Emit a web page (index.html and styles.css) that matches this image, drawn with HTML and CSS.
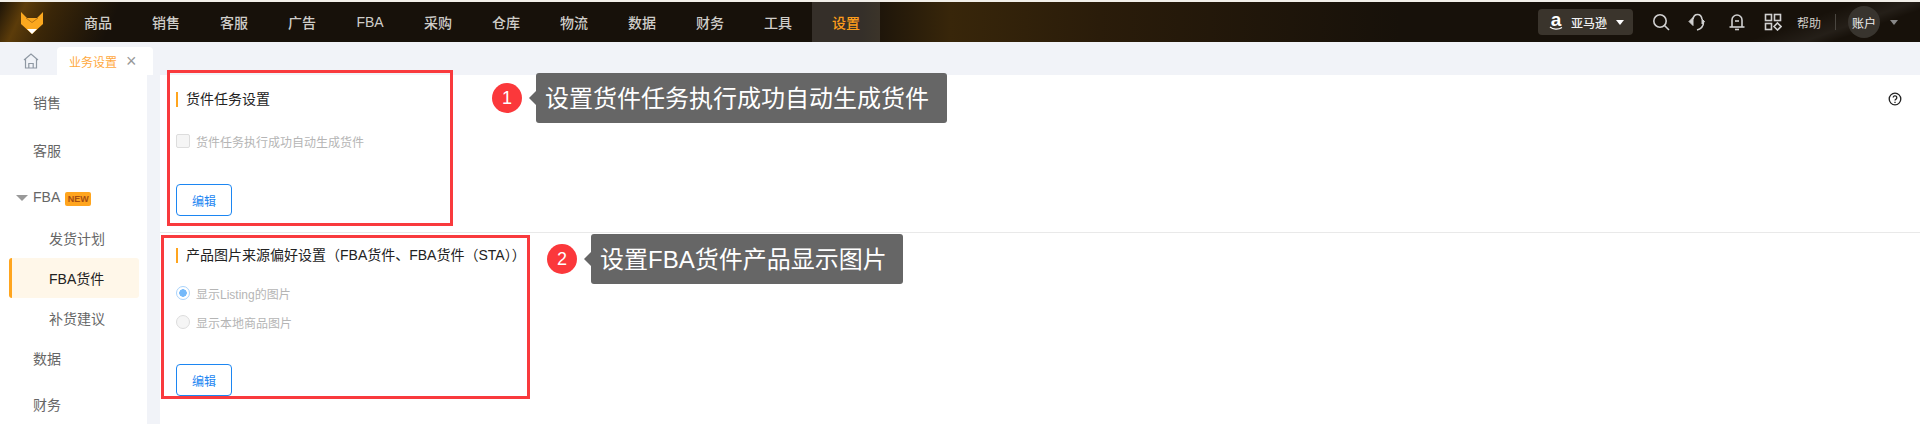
FILE: index.html
```html
<!DOCTYPE html>
<html lang="zh-CN">
<head>
    <meta charset="UTF-8">
    <meta name="viewport" content="width=device-width, initial-scale=1.0">
    <title>业务设置</title>
    <link rel="stylesheet" href="styles.css">
</head>
<body>
    <header class="topbar">
        <div class="logo">
            <svg width="22" height="22" viewBox="0 0 22 22">
                <polygon points="0,0 6,6 16,6 22,0 22,12 11,22 0,12" fill="#fba81f"/>
                <polygon points="6,17 16,17 11,22" fill="#fff"/>
                <polyline points="5,6 11,10.500 17,6" fill="none" stroke="#b87412" stroke-width="1"/>
            </svg>
        </div>
        <nav class="nav">
            <a class="nav-item">商品</a>
            <a class="nav-item">销售</a>
            <a class="nav-item">客服</a>
            <a class="nav-item">广告</a>
            <a class="nav-item">FBA</a>
            <a class="nav-item">采购</a>
            <a class="nav-item">仓库</a>
            <a class="nav-item">物流</a>
            <a class="nav-item">数据</a>
            <a class="nav-item">财务</a>
            <a class="nav-item">工具</a>
            <a class="nav-item active">设置</a>
        </nav>
        <div class="tools">
            <div class="platform">
                <span class="amazon">a<svg width="14" height="5" viewBox="0 0 14 5"><path d="M1 1c3 2.500 8 3 12 .5" fill="none" stroke="#fff" stroke-width="1.200"/></svg></span>
                <span class="platform-name">亚马逊</span>
                <span class="caret white"></span>
            </div>
            <svg class="tool tool-search" width="18" height="18" viewBox="0 0 18 18" fill="none" stroke="#d0d0d0" stroke-width="1.600">
                <circle cx="8" cy="8" r="6.200"/><path d="M12.500 12.500l4.500 4.500"/>
            </svg>
            <svg class="tool tool-service" width="18" height="18" viewBox="0 0 18 18" fill="none" stroke="#d0d0d0" stroke-width="1.600">
                <path d="M5 6c1-6 8-6 9 0"/><path d="M15.500 9c0 4-3 7-6.500 8"/>
                <path d="M5 4.500L1 8.500l4 4zM14 6l2.500 2.500L14 11z" fill="#d0d0d0" stroke-width="1"/>
            </svg>
            <svg class="tool tool-bell" width="18" height="18" viewBox="0 0 18 18" fill="none" stroke="#d0d0d0" stroke-width="1.600">
                <path d="M4 14V7a5 5 0 0 1 10 0v7"/><path d="M1.500 14h15"/><path d="M7 8h4"/><path d="M7 16.500h4"/>
            </svg>
            <svg class="tool tool-apps" width="18" height="18" viewBox="0 0 18 18" fill="none" stroke="#d0d0d0" stroke-width="1.600">
                <rect x="1.500" y="1.500" width="6" height="6"/><rect x="10.500" y="1.500" width="6" height="6"/>
                <rect x="1.500" y="10.500" width="6" height="6"/><path d="M13.500 10l3.500 3.500-3.500 3.500-3.500-3.500z"/>
            </svg>
            <span class="help">帮助</span>
            <span class="sep"></span>
            <span class="avatar">账户</span>
            <span class="caret gray"></span>
        </div>
    </header>

    <div class="tabs">
        <div class="home-tab">
            <svg width="16" height="16" viewBox="0 0 16 16" fill="none" stroke="#8f98a3" stroke-width="1.200">
                <path d="M1 7l7-6 7 6"/><path d="M2.500 6v9h11V6"/><path d="M5.800 15v-4.500h4.400V15"/>
            </svg>
        </div>
        <div class="tab">业务设置<span class="tab-close">×</span></div>
    </div>

    <div class="main">
        <aside class="sidebar">
            <div class="side-item">销售</div>
            <div class="side-item">客服</div>
            <div class="side-item open">
                <span class="side-caret"></span>FBA<span class="new-badge">NEW</span>
            </div>
            <div class="side-sub">
                <div class="sub-item">发货计划</div>
                <div class="sub-item current">FBA货件</div>
                <div class="sub-item">补货建议</div>
            </div>
            <div class="side-item low">数据</div>
            <div class="side-item low">财务</div>
        </aside>

        <section class="content">
            <div class="block first">
                <h3 class="block-title">货件任务设置</h3>
                <label class="check-row"><span class="checkbox"></span>货件任务执行成功自动生成货件</label>
                <button class="edit-btn">编辑</button>
                <svg class="question" width="14" height="14" viewBox="0 0 14 14" fill="none" stroke="#222" stroke-width="1.300">
                    <circle cx="7" cy="7" r="5.800"/><path d="M5.200 5.600a1.800 1.800 0 1 1 2.800 1.500c-.7.400-1 .8-1 1.500"/><path d="M7 9.700v1.200"/>
                </svg>
            </div>
            <div class="block second">
                <h3 class="block-title">产品图片来源偏好设置（FBA货件、FBA货件（STA））</h3>
                <label class="radio-row"><span class="radio on"></span>显示Listing的图片</label>
                <label class="radio-row"><span class="radio"></span>显示本地商品图片</label>
                <button class="edit-btn">编辑</button>
            </div>
        </section>
    </div>

    <!-- annotations drawn over the page -->
    <div class="mark mark-one"></div>
    <div class="mark mark-two"></div>
    <div class="note note-one"><span class="num">1</span><span class="note-text">设置货件任务执行成功自动生成货件</span></div>
    <div class="note note-two"><span class="num">2</span><span class="note-text">设置FBA货件产品显示图片</span></div>
</body>
</html>
```

FILE: styles.css
```css
* {
    box-sizing: border-box;
}
html, body {
    height: 100%;
}
body {
    position: relative;
    margin: 0;
    overflow: hidden;
    display: flex;
    flex-direction: column;
    font-family: "Liberation Sans", "Noto Sans CJK SC", sans-serif;
    font-size: 14px;
    background-color: #f1f3f8;
    color: #333;
}

/* top bar */
.topbar {
    flex: none;
    height: 42px;
    display: flex;
    align-items: stretch;
    border-top: 2px solid #f2efe9;
    background-color: #17110a;
    background-image:
        linear-gradient(115deg, #1d1408 0, #5c3c0a 24px, #3a2608 50px, rgba(23, 17, 10, 0) 110px),
        linear-gradient(90deg, rgba(23, 17, 10, 0) 860px, #38260a 950px, #2a1c0a 1100px, rgba(23, 17, 10, 0) 1400px),
        linear-gradient(160deg, rgba(255, 255, 255, 0) calc(100% - 60px), rgba(255, 255, 255, 0.06) calc(100% - 40px), rgba(255, 255, 255, 0) calc(100% - 30px));
}
.logo {
    width: 64px;
    padding: 10px 0 0 21px;
}
.logo svg {
    display: block;
}
.nav {
    display: flex;
}
.nav-item {
    width: 68px;
    display: flex;
    align-items: center;
    justify-content: center;
    color: #cfcdc9;
    font-weight: 500;
}
.nav-item.active {
    background-color: rgba(255, 255, 255, 0.13);
    color: #fb9c1c;
}
.tools {
    margin-left: auto;
    display: flex;
    align-items: center;
}
.platform {
    width: 95px;
    height: 26px;
    margin-right: 19px;
    padding-left: 11px;
    display: flex;
    align-items: center;
    background-color: #3a342c;
    border-radius: 4px;
}
.amazon {
    position: relative;
    width: 14px;
    margin-top: -4px;
    font-family: "Liberation Sans", sans-serif;
    font-size: 19px;
    font-weight: bold;
    line-height: 18px;
    color: #fff;
    text-align: center;
}
.amazon svg {
    position: absolute;
    left: 0;
    top: 15px;
}
.platform-name {
    margin-left: 8px;
    color: #f0f0f0;
    font-size: 12px;
    font-weight: 500;
}
.caret {
    width: 0;
    height: 0;
    border-left: 4px solid transparent;
    border-right: 4px solid transparent;
    border-top: 5px solid #fff;
}
.caret.white {
    margin-left: 9px;
}
.caret.gray {
    margin: 0 22px 0 10px;
    border-top-color: #888;
}
.tool-search {
    margin-right: 18px;
}
.tool-service {
    margin-right: 22px;
}
.tool-bell {
    margin-right: 18px;
}
.tool-apps {
    margin-right: 15px;
}
.help {
    color: #cfcdc9;
    font-size: 12px;
}
.sep {
    width: 1px;
    height: 16px;
    margin: 0 12px 0 14px;
    background-color: #4a4640;
}
.avatar {
    width: 32px;
    height: 32px;
    border-radius: 50%;
    display: flex;
    align-items: center;
    justify-content: center;
    background-color: #38342e;
    color: #eee;
    font-size: 12px;
}

/* tabs */
.tabs {
    flex: none;
    height: 33px;
    padding-top: 5px;
    display: flex;
}
.home-tab {
    width: 57px;
    padding: 6px 0 0 23px;
}
.home-tab svg {
    display: block;
}
.tab {
    width: 96px;
    padding-left: 12px;
    display: flex;
    align-items: center;
    background-color: #fff;
    border-radius: 4px 4px 0 0;
    color: #ffa940;
    font-size: 12px;
}
.tab-close {
    margin-left: 9px;
    color: #999;
    font-size: 18px;
    font-weight: normal;
    line-height: 1;
}

/* main area */
.main {
    flex: 1;
    display: flex;
    min-height: 0;
}
.sidebar {
    flex: none;
    width: 147px;
    padding-top: 3px;
    background-color: #fff;
    color: #666;
}
.side-item {
    height: 48px;
    padding-left: 33px;
    display: flex;
    align-items: center;
}
.side-item.open {
    position: relative;
    height: 46px;
}
.side-item.low {
    height: 46px;
}
.side-caret {
    position: absolute;
    left: 16px;
    top: 21px;
    border-left: 6px solid transparent;
    border-right: 6px solid transparent;
    border-top: 6px solid #999;
}
.new-badge {
    width: 26px;
    height: 14px;
    margin: 4px 0 0 5px;
    display: flex;
    align-items: center;
    justify-content: center;
    background-color: #ffa51e;
    border-radius: 2px;
    color: #a64e12;
    font-size: 9px;
    font-weight: bold;
}
.side-sub {
    margin: -2px 0 -3px;
}
.sub-item {
    height: 40px;
    padding-left: 49px;
    display: flex;
    align-items: center;
}
.sub-item.current {
    margin: 0 8px 0 9px;
    padding-left: 37px;
    background-color: #fff7e9;
    border-left: 3px solid #ffa51e;
    border-radius: 3px;
    color: #222;
}
.content {
    flex: 1;
    margin-left: 13px;
    background-color: #fff;
}
.block {
    position: relative;
    padding-left: 16px;
}
.block.first {
    height: 158px;
    padding-top: 17px;
    border-bottom: 1px solid #e9e9e9;
}
.block.second {
    padding-top: 15px;
}
.block-title {
    margin: 0;
    padding: 0 0 3px 8px;
    height: 15px;
    display: flex;
    align-items: center;
    border-left: 2px solid #ffa51e;
    color: #222;
    font-size: 14px;
    font-weight: normal;
    white-space: nowrap;
}
.check-row, .radio-row {
    display: flex;
    align-items: center;
    color: #b5b5b5;
    font-size: 12px;
}
.check-row {
    margin-top: 27px;
    height: 14px;
}
.checkbox {
    width: 14px;
    height: 14px;
    margin-right: 6px;
    background-color: #f5f5f5;
    border: 1px solid #ddd;
    border-radius: 2px;
}
.radio-row {
    height: 14px;
}
.block-title + .radio-row {
    margin-top: 23px;
}
.radio-row + .radio-row {
    margin-top: 15px;
}
.radio {
    width: 14px;
    height: 14px;
    margin-right: 6px;
    background-color: #f5f5f5;
    border: 1px solid #ddd;
    border-radius: 50%;
}
.radio.on {
    background-color: #fff;
    border-color: #a9d3fb;
    background-image: radial-gradient(circle, #74b9fa 0, #74b9fa 3.500px, #fff 4px);
}
.edit-btn {
    display: block;
    width: 56px;
    height: 32px;
    padding: 0;
    background-color: #fff;
    border: 1px solid #1c86f2;
    border-radius: 4px;
    color: #1c86f2;
    font-family: inherit;
    font-size: 12px;
}
.first .edit-btn {
    margin-top: 36px;
}
.second .edit-btn {
    margin-top: 35px;
}
.question {
    position: absolute;
    right: 18px;
    top: 17px;
}

/* annotations */
.mark {
    position: absolute;
    border: 3px solid #f93a3d;
}
.mark-one {
    left: 167px;
    top: 70px;
    width: 286px;
    height: 156px;
}
.mark-two {
    left: 161px;
    top: 235px;
    width: 369px;
    height: 164px;
}
.note {
    position: absolute;
    display: flex;
    align-items: center;
}
.note-one {
    left: 492px;
    top: 73px;
}
.note-two {
    left: 547px;
    top: 234px;
}
.num {
    width: 30px;
    height: 30px;
    margin-right: 14px;
    display: flex;
    align-items: center;
    justify-content: center;
    background-color: #fb383b;
    border-radius: 50%;
    color: #fff;
    font-size: 18px;
}
.note-text {
    position: relative;
    height: 50px;
    padding: 0 18px 3px 9px;
    display: flex;
    align-items: center;
    background-color: #666;
    border-radius: 3px;
    color: #fff;
    font-size: 24px;
    white-space: nowrap;
}
.note-two .note-text {
    padding-right: 16px;
}
.note-text::before {
    content: "";
    position: absolute;
    left: -7px;
    top: 18px;
    border-top: 7px solid transparent;
    border-bottom: 7px solid transparent;
    border-right: 7px solid #666;
}
```
